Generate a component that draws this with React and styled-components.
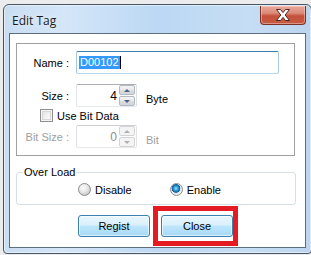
import React from "react";
import styled, { createGlobalStyle } from "styled-components";

const GlobalStyle = createGlobalStyle`
  html, body {
    margin: 0;
    padding: 0;
    background: #ececec;
    overflow: hidden;
  }
  body {
    font-family: "Liberation Sans", Arial, sans-serif;
    font-size: 11px;
    color: #000;
  }
`;

export default function App() {
  return (
    <>
      <GlobalStyle />
      <Page>
        <Window>
          <TitleBar>
            <Title>Edit Tag</Title>
            <CloseBox>
              <svg width="18" height="14" viewBox="0 0 18 14">
                <path
                  d="M2.5 1.5 L6.5 1.5 L9 4.6 L11.5 1.5 L15.5 1.5 L11.2 7 L15.5 12.5 L11.5 12.5 L9 9.4 L6.5 12.5 L2.5 12.5 L6.8 7 Z"
                  fill="#fff"
                  stroke="#4a2a28"
                  strokeWidth="1"
                  strokeLinejoin="round"
                />
              </svg>
            </CloseBox>
          </TitleBar>

          <Client>
            <Group>
              <FieldRow>
                <Label>Name :</Label>
                <TextBox $focused>
                  <Selected>D00102</Selected>
                  <Caret />
                </TextBox>
              </FieldRow>

              <FieldRow $top={10}>
                <Label>Size :</Label>
                <SpinBox value="4" />
                <Unit>Byte</Unit>
              </FieldRow>

              <CheckRow>
                <CheckBox />
                <span>Use Bit Data</span>
              </CheckRow>

              <FieldRow $top={3}>
                <Label $disabled>Bit Size :</Label>
                <SpinBox value="0" disabled />
                <Unit $disabled>Bit</Unit>
              </FieldRow>
            </Group>

            <OverLoad>
              <Legend>Over Load</Legend>
              <RadioRow>
                <RadioItem>
                  <Radio />
                  <span>Disable</span>
                </RadioItem>
                <RadioItem $left={38}>
                  <Radio $checked />
                  <span>Enable</span>
                </RadioItem>
              </RadioRow>
            </OverLoad>

            <ButtonRow>
              <Button>Regist</Button>
              <Highlight>
                <Button>Close</Button>
              </Highlight>
            </ButtonRow>
          </Client>
        </Window>
      </Page>
    </>
  );
}

function SpinBox({ value, disabled }) {
  return (
    <SpinField $disabled={disabled}>
      <SpinValue $disabled={disabled}>{value}</SpinValue>
      <SpinCol>
        <SpinButton $disabled={disabled}>
          <Arrow $up $disabled={disabled} />
        </SpinButton>
        <SpinButton $disabled={disabled}>
          <Arrow $disabled={disabled} />
        </SpinButton>
      </SpinCol>
    </SpinField>
  );
}

const Page = styled.div`
  width: 311px;
  height: 255px;
  padding: 4px 0 0 3px;
  box-sizing: border-box;
`;

const Window = styled.div`
  width: 309px;
  height: 250px;
  box-sizing: border-box;
  border: 1px solid #4a5564;
  border-radius: 6px 6px 4px 4px;
  background: linear-gradient(
    90deg,
    #c9ddf2 0%,
    #d4e6f8 20%,
    #bcd8f4 50%,
    #c6def4 80%,
    #bcd4ee 100%
  );
  box-shadow: inset 0 0 0 1px rgba(255, 255, 255, 0.5);
  display: flex;
  flex-direction: column;
  padding: 0 5px 5px 5px;
`;

const TitleBar = styled.div`
  height: 28px;
  display: flex;
  align-items: flex-start;
  justify-content: space-between;
`;

const Title = styled.div`
  font-family: "Open Sans", "Noto Sans", sans-serif;
  font-size: 12px;
  color: #1a1a1a;
  padding: 7px 0 0 3px;
  text-shadow: 0 0 6px rgba(255, 255, 255, 0.9);
`;

const CloseBox = styled.div`
  width: 46px;
  height: 19px;
  margin-top: 1px;
  box-sizing: border-box;
  border: 1px solid #7c3327;
  border-top: none;
  border-radius: 0 0 4px 4px;
  background: linear-gradient(
    180deg,
    #e9a99b 0%,
    #dc8a78 40%,
    #c6503b 55%,
    #c45b44 100%
  );
  box-shadow: inset 0 0 0 1px rgba(255, 220, 210, 0.45);
  display: flex;
  align-items: center;
  justify-content: center;
`;

const Client = styled.div`
  flex: 1;
  box-sizing: border-box;
  background: #fff;
  border: 1px solid #5f6e7e;
  display: flex;
  flex-direction: column;
`;

const Group = styled.div`
  margin: 9px 10px 0 6px;
  height: 113px;
  box-sizing: border-box;
  border: 1px solid #a0a0a0;
  padding-top: 7px;
  display: flex;
  flex-direction: column;
`;

const FieldRow = styled.div`
  display: flex;
  align-items: center;
  height: 23px;
  margin-top: ${(p) => p.$top || 0}px;
`;

const Label = styled.div`
  width: 52px;
  text-align: right;
  margin-right: 7px;
  color: ${(p) => (p.$disabled ? "#a0a0a0" : "#000")};
  white-space: nowrap;
`;

const TextBox = styled.div`
  width: 203px;
  height: 23px;
  box-sizing: border-box;
  border: 1px solid;
  border-color: #3d7bad #a4c9e3 #b7d9ed #a4c9e3;
  border-radius: 2px;
  display: flex;
  align-items: center;
  padding-left: 2px;
`;

const Selected = styled.span`
  background: #3399ff;
  color: #fff;
  line-height: 13px;
  padding: 0 1px;
`;

const Caret = styled.span`
  width: 1px;
  height: 13px;
  background: #000;
`;

const SpinField = styled.div`
  width: 61px;
  height: 23px;
  box-sizing: border-box;
  border: 1px solid;
  border-color: ${(p) =>
    p.$disabled ? "#cdd0d6 #e0e2e6 #e6e8ec #e0e2e6" : "#abadb3 #dbdfe6 #e3e9ef #e2e3ea"};
  border-radius: 2px;
  display: flex;
  align-items: center;
  justify-content: flex-end;
  padding-right: 1px;
`;

const SpinValue = styled.span`
  color: ${(p) => (p.$disabled ? "#8d8d8d" : "#000")};
  margin-right: 2px;
  font-size: 12px;
`;

const SpinCol = styled.div`
  display: flex;
  flex-direction: column;
  gap: 1px;
`;

const SpinButton = styled.div`
  width: 16px;
  height: 10px;
  box-sizing: border-box;
  border: 1px solid ${(p) => (p.$disabled ? "#d4d4d4" : "#b3b8c2")};
  border-radius: 2px;
  background: ${(p) =>
    p.$disabled
      ? "#f4f4f4"
      : "linear-gradient(180deg, #f5f5f5 0%, #e8e8e8 50%, #dcdcdc 51%, #d4d6da 100%)"};
  display: flex;
  align-items: center;
  justify-content: center;
`;

const Arrow = styled.span`
  width: 0;
  height: 0;
  border-left: 3px solid transparent;
  border-right: 3px solid transparent;
  ${(p) =>
    p.$up
      ? `border-bottom: 3px solid ${p.$disabled ? "#b0b0b0" : "#4c5f8a"};`
      : `border-top: 3px solid ${p.$disabled ? "#b0b0b0" : "#4c5f8a"};`}
`;

const Unit = styled.span`
  margin-left: 9px;
  margin-top: 6px;
  color: ${(p) => (p.$disabled ? "#a0a0a0" : "#000")};
`;

const CheckRow = styled.div`
  display: flex;
  align-items: center;
  height: 13px;
  margin: 2px 0 0 23px;
  gap: 4px;
`;

const CheckBox = styled.span`
  width: 13px;
  height: 13px;
  box-sizing: border-box;
  border: 1px solid #8e8f8f;
  background: linear-gradient(135deg, #dcdcdc 0%, #f4f4f4 60%, #fff 100%);
  box-shadow: inset 0 0 0 1px #f4f4f4, inset 0 0 0 2px #d6d6d6;
`;

const OverLoad = styled.fieldset`
  margin: 10px 9px 0 6px;
  padding: 0 0 8px 6px;
  border: 1px solid #d5dfe5;
  border-radius: 3px;
  min-width: 0;
`;

const Legend = styled.legend`
  padding: 0 1px;
  line-height: 13px;
`;

const RadioRow = styled.div`
  display: flex;
  align-items: center;
  height: 13px;
  margin: 4px 0 0 55px;
`;

const RadioItem = styled.label`
  display: flex;
  align-items: center;
  gap: 4px;
  margin-left: ${(p) => p.$left || 0}px;
`;

const Radio = styled.span`
  width: 13px;
  height: 13px;
  box-sizing: border-box;
  border-radius: 50%;
  border: 1px solid #8d8d8d;
  background: ${(p) =>
    p.$checked
      ? "radial-gradient(circle at 45% 40%, #9fe3ff 0%, #2a9ad6 25%, #0d5f9e 45%, #e6e6e6 52%, #f6f6f6 100%)"
      : "radial-gradient(circle at 40% 35%, #ffffff 0%, #e8e8e8 40%, #c9c9c9 75%, #f2f2f2 100%)"};
`;

const ButtonRow = styled.div`
  display: flex;
  align-items: center;
  margin-top: 1px;
  padding-left: 68px;
`;

const Button = styled.button`
  width: 72px;
  height: 22px;
  box-sizing: border-box;
  border: 1px solid #3c7fb1;
  border-radius: 3px;
  background: linear-gradient(
    180deg,
    #eaf6fd 0%,
    #d9f0fc 45%,
    #bee6fd 50%,
    #a7d9f5 100%
  );
  box-shadow: inset 0 0 0 1px rgba(255, 255, 255, 0.6);
  font-family: "Liberation Sans", Arial, sans-serif;
  font-size: 11px;
  color: #000;
  padding: 0;
  margin-right: 3px;
`;

const Highlight = styled.div`
  border: 5px solid #e41b23;
  padding: 4px 0 4px 3px;
  display: flex;

  & > ${Button} {
    margin-right: 0;
  }
`;
